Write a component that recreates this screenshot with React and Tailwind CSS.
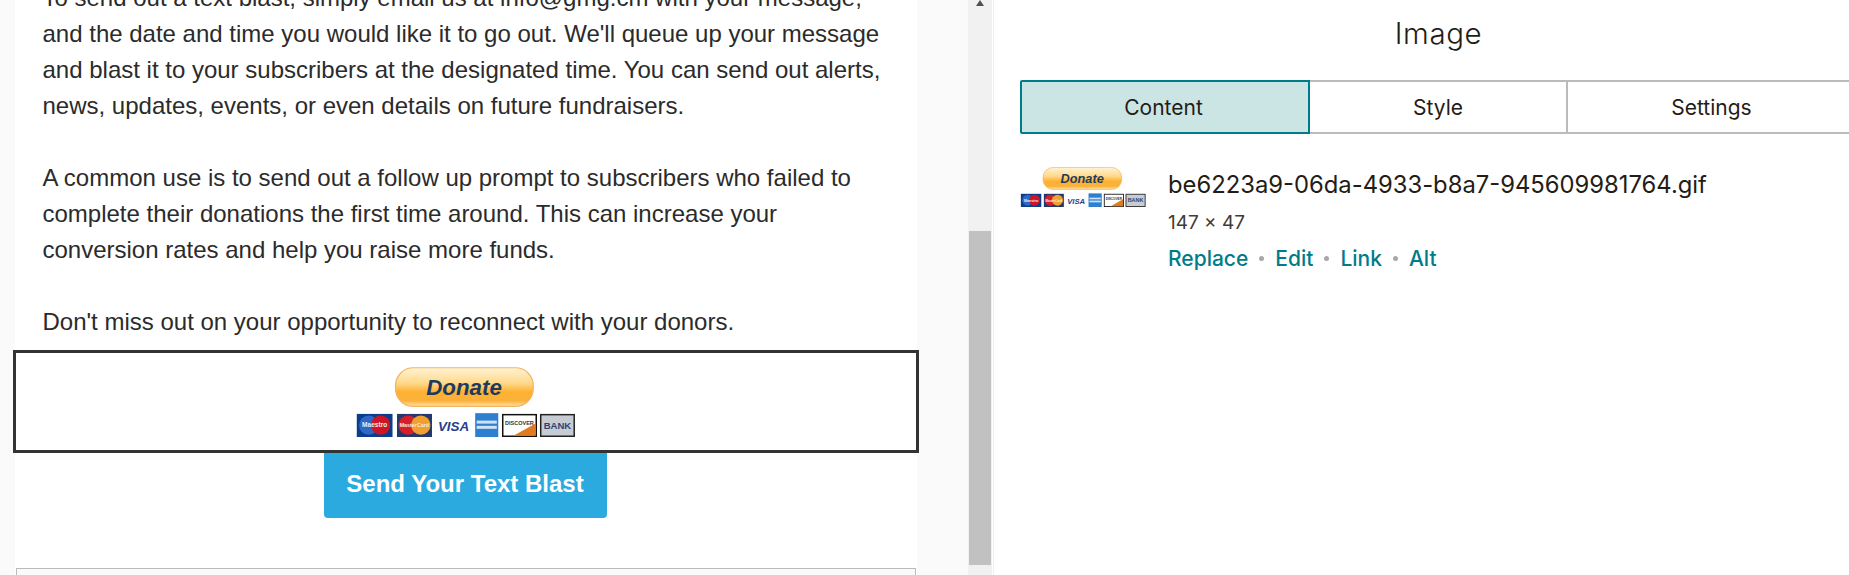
function DonateImage({ className }) {
  return (
    <svg viewBox="0 0 147 47" className={className}>
      <defs>
        <linearGradient id="btn" x1="0" y1="0" x2="0" y2="1">
          <stop offset="0" stopColor="#fff3d6" />
          <stop offset="0.4" stopColor="#ffd98a" />
          <stop offset="0.62" stopColor="#fdb132" />
          <stop offset="0.85" stopColor="#fbb13a" />
          <stop offset="1" stopColor="#ffe3ac" />
        </linearGradient>
      </defs>
      <rect x="26.5" y="0.5" width="92.5" height="26" rx="12" fill="url(#btn)" stroke="#f2b45f" strokeWidth="0.8" />
      <text x="72.5" y="18.5" textAnchor="middle" fontFamily="Liberation Sans, sans-serif" fontSize="15" fontWeight="700" fontStyle="italic" fill="#1e3a5f">
        Donate
      </text>

      {/* maestro */}
      <rect x="0.5" y="31.5" width="24" height="15.5" fill="#0b3d8c" />
      <circle cx="8.5" cy="39" r="6.5" fill="#2f68c4" />
      <circle cx="16.5" cy="39" r="6.5" fill="#cc1626" />
      <text x="12.5" y="40.6" textAnchor="middle" fontFamily="Liberation Sans, sans-serif" fontSize="4.4" fontWeight="700" fill="#e8edf8">
        Maestro
      </text>

      {/* mastercard */}
      <rect x="27.5" y="31.5" width="23.5" height="15.5" fill="#24386e" />
      <circle cx="35" cy="39" r="6.5" fill="#d5202c" />
      <circle cx="43.5" cy="39" r="6.5" fill="#f0a030" />
      <text x="39.2" y="40.6" textAnchor="middle" fontFamily="Liberation Sans, sans-serif" fontSize="3.6" fontWeight="700" fill="#f9ead9">
        MasterCard
      </text>

      {/* visa */}
      <text x="65.5" y="43" textAnchor="middle" fontFamily="Liberation Sans, sans-serif" fontSize="9" fontWeight="700" fontStyle="italic" fill="#26408f">
        VISA
      </text>

      {/* amex */}
      <rect x="80" y="31" width="15.5" height="16" fill="#2f7fd0" />
      <rect x="81" y="36" width="13.5" height="2" fill="#cfe2f7" />
      <rect x="81" y="39.5" width="13.5" height="2" fill="#cfe2f7" />

      {/* discover */}
      <rect x="98.5" y="32" width="22.5" height="14.5" fill="#fff" stroke="#111" strokeWidth="1" />
      <path d="M106 46 L120.5 38 L120.5 46 Z" fill="#e07b20" />
      <text x="109.7" y="38.8" textAnchor="middle" fontFamily="Liberation Sans, sans-serif" fontSize="3.7" fontWeight="700" fill="#333">
        DISCOVER
      </text>

      {/* bank */}
      <rect x="124" y="32" width="22.5" height="14.5" fill="#c6cbd4" stroke="#222" strokeWidth="1" />
      <text x="135.2" y="41.6" textAnchor="middle" fontFamily="Liberation Sans, sans-serif" fontSize="6.4" fontWeight="700" fill="#2c4470">
        BANK
      </text>
    </svg>
  );
}

export default function App() {
  return (
    <div className="flex h-[575px] w-[1849px] overflow-hidden bg-white font-['Liberation_Sans',sans-serif]">
      {/* Email preview */}
      <div className="w-[968px] shrink-0 bg-[#fafafa] pl-[15px] pr-[51px]">
        <div className="-mt-[20px] h-[595px] bg-white">
          <div className="pl-[27.5px] text-[24px] leading-[36px] text-[#2b2b2b]">
            <p>
              To send out a text blast, simply email us at info@gmg.cm with your message,
              <br />
              and the date and time you would like it to go out. We'll queue up your message
              <br />
              and blast it to your subscribers at the designated time. You can send out alerts,
              <br />
              news, updates, events, or even details on future fundraisers.
            </p>
            <p className="mt-[36px]">
              A common use is to send out a follow up prompt to subscribers who failed to
              <br />
              complete their donations the first time around. This can increase your
              <br />
              conversion rates and help you raise more funds.
            </p>
            <p className="mt-[36px]">Don't miss out on your opportunity to reconnect with your donors.</p>
          </div>

          <div className="mt-[10px] -mx-[2px] flex h-[103px] items-center justify-center border-[3px] border-[#333]">
            <DonateImage className="h-[70px] w-[219px] -translate-x-[1px]" />
          </div>

          <div className="flex justify-center">
            <button className="-ml-[2px] h-[65px] w-[283px] rounded-b-[4px] bg-[#2baadf] pb-[4px] text-[24px] font-bold text-white">
              Send Your Text Blast
            </button>
          </div>

          <div className="mx-[1px] mt-[50px] h-[20px] border border-[#bbb] bg-[#fafafa]" />
        </div>
      </div>

      {/* Scrollbar */}
      <div className="flex w-[24px] shrink-0 flex-col bg-[#f1f1f1]">
        <div className="flex h-[231px] justify-center">
          <svg width="12" height="6" viewBox="0 0 12 6">
            <path d="M2 6 L6 0 L10 6 Z" fill="#505050" />
          </svg>
        </div>
        <div className="mx-[1px] h-[334px] bg-[#c1c1c1]" />
      </div>

      {/* Image settings */}
      <div className="ml-[1px] min-w-0 flex-1 border-l border-[#eee] pl-[26px] font-['Inter',sans-serif]">
        <h2 className="pt-[14px] pb-[28px] pl-[8px] text-center text-[29.5px] font-light leading-[38px] tracking-[0.6px] text-[#241c15]">
          Image
        </h2>
        <div className="-mr-[10px] flex h-[54px] text-[21px] text-[#241c15]">
          <div className="flex w-[290px] items-center justify-center rounded-l-[2px] border-2 border-[#007c89] bg-[#cbe5e5] pt-px pr-[3px]">
            Content
          </div>
          <div className="flex w-[258px] items-center justify-center border-y-2 border-r-2 border-[#bbb] pt-px">
            Style
          </div>
          <div className="flex flex-1 items-center justify-center border-y-2 border-[#bbb] pt-px pr-[4px]">
            Settings
          </div>
        </div>
        <div className="mt-[32px] flex">
          <DonateImage className="mt-px h-[40px] w-[126px] shrink-0" />
          <div className="ml-[22px]">
            <div className="text-[23.8px] leading-[38px] text-[#241c15]">be6223a9-06da-4933-b8a7-945609981764.gif</div>
            <div className="text-[19px] leading-[38px] text-[#403b37]">147 × 47</div>
            <div className="flex items-center text-[21px] font-medium leading-[33px] text-[#007c89]">
              <span>Replace</span>
              <span className="mx-[11px] h-[5px] w-[5px] rounded-full bg-[#a8a8a8]" />
              <span>Edit</span>
              <span className="mx-[11px] h-[5px] w-[5px] rounded-full bg-[#a8a8a8]" />
              <span>Link</span>
              <span className="mx-[11px] h-[5px] w-[5px] rounded-full bg-[#a8a8a8]" />
              <span>Alt</span>
            </div>
          </div>
        </div>
      </div>
    </div>
  );
}
